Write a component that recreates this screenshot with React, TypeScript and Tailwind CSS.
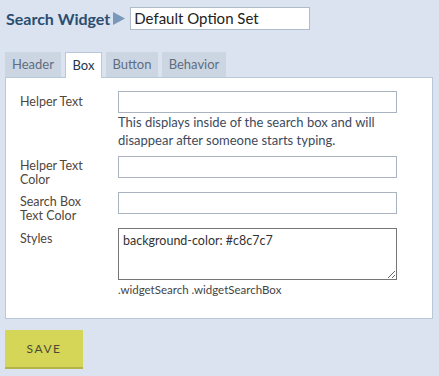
import React from 'react';

const font = { fontFamily: 'Lato, "Open Sans", sans-serif' };

const tabs = [
  { name: 'Header', w: 'w-[56px]' },
  { name: 'Box', w: 'w-[37px]' },
  { name: 'Button', w: 'w-[52px]' },
  { name: 'Behavior', w: 'w-[64px]' },
];

export default function App() {
  return (
    <div className="w-[439px] h-[376px] bg-[#dae3ef] px-[5px] pt-[7px] overflow-hidden" style={font}>
      {/* title row */}
      <div className="flex items-center h-[23px]">
        <span className="ml-[1px] text-[16px] font-bold text-[#2b4d70]">Search Widget</span>
        <svg className="ml-[3px]" width="12" height="13" viewBox="0 0 12 13">
          <polygon points="0,0 12,6.5 0,13" fill="#7a98ba" />
        </svg>
        <div className="ml-[5px] w-[180px] h-[23px] bg-white border border-[#aebbc9] flex items-center px-[3px] text-[15px] text-[#222]">
          Default Option Set
        </div>
      </div>

      {/* tabs */}
      <div className="mt-[21px] flex gap-[4px] h-[26px] items-end">
        {tabs.map((t) =>
          t.name === 'Box' ? (
            <div
              key={t.name}
              className={`${t.w} h-[26px] bg-white border border-b-0 border-[#b9c8d8] flex items-center justify-center text-[13px] text-[#22354a] relative -mb-[1px] z-10`}
            >
              {t.name}
            </div>
          ) : (
            <div
              key={t.name}
              className={`${t.w} h-[25px] bg-[#ccd6e3] flex items-center justify-center text-[13px] text-[#5f6d80]`}
            >
              {t.name}
            </div>
          )
        )}
      </div>

      {/* panel */}
      <div className="w-[428px] bg-white border border-[#b9c8d8] pl-[14px] pt-[13px] pb-[21px]">
        {/* helper text */}
        <div className="flex">
          <div className="w-[98px] pt-[4px] text-[12.5px] leading-[14px] text-[#4f463c]">Helper Text</div>
          <div className="w-[279px]">
            <div className="h-[22px] border border-[#a9b4c0] bg-white" />
            <div className="mt-[1px] text-[13px] leading-[17.5px] text-[#3c4a5c]">
              This displays inside of the search box and will disappear after someone starts typing.
            </div>
          </div>
        </div>

        <div className="flex mt-[7px] h-[31px]">
          <div className="w-[98px] pt-[3px] text-[12.5px] leading-[14px] text-[#4f463c]">
            Helper Text
            <br />
            Color
          </div>
          <div className="w-[279px] h-[22px] border border-[#a9b4c0] bg-white" />
        </div>

        <div className="flex mt-[5px] h-[31px]">
          <div className="w-[98px] pt-[3px] text-[12.5px] leading-[14px] text-[#4f463c]">
            Search Box
            <br />
            Text Color
          </div>
          <div className="w-[279px] h-[22px] border border-[#a9b4c0] bg-white" />
        </div>

        <div className="flex mt-[5px]">
          <div className="w-[98px] pt-[4px] text-[12.5px] leading-[14px] text-[#4f463c]">Styles</div>
          <div className="w-[279px]">
            <textarea
              className="block w-[279px] h-[52px] border border-[#767676] px-[4px] pt-[3px] text-[12.5px] text-[#333] resize-y outline-none"
              style={font}
              defaultValue="background-color: #c8c7c7"
            />
            <div className="mt-[3px] text-[11.5px] leading-[14px] text-[#444]">.widgetSearch .widgetSearchBox</div>
          </div>
        </div>
      </div>

      {/* save */}
      <button className="mt-[11px] w-[78px] h-[39px] bg-[#d5d657] border-b-2 border-[#b4b548] text-[12px] tracking-[1.5px] text-[#4b4a35]">
        SAVE
      </button>
    </div>
  );
}
